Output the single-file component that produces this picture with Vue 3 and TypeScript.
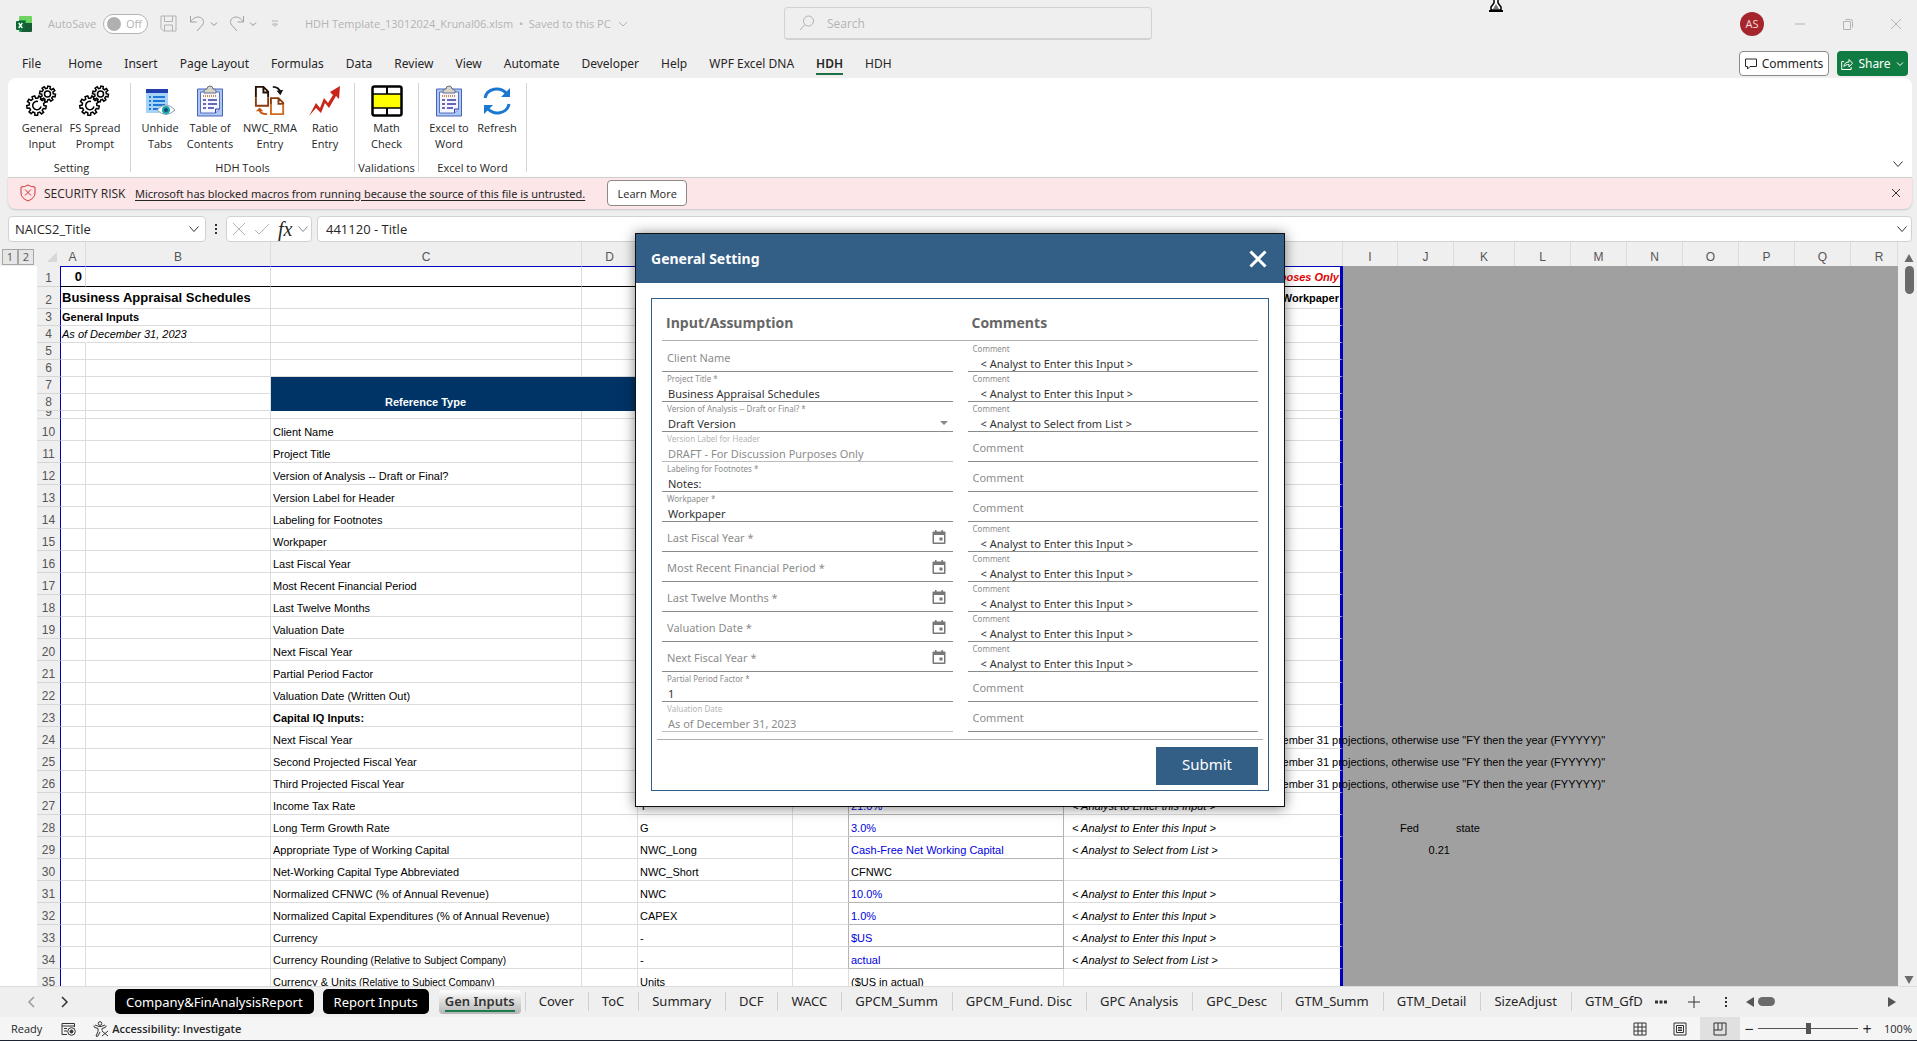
<script setup lang="ts">
import { ref } from 'vue'

type Cell = { text: string; small?: string; cls?: string }
type Row = { n: number; cls?: string; cells: Record<string, Cell> }
type Field = { id: string; label: string; value?: string; kind?: 'select' | 'date'; disabled?: boolean; comment?: string }

const menu = ['File', 'Home', 'Insert', 'Page Layout', 'Formulas', 'Data', 'Review', 'View', 'Automate', 'Developer', 'Help', 'WPF Excel DNA', 'HDH', 'HDH']
const activeMenu = 12

const groups = [
  { cls: 'g-setting', caption: 'Setting', items: [{ icon: 'gears', a: 'General', b: 'Input' }, { icon: 'gears', a: 'FS Spread', b: 'Prompt' }] },
  { cls: 'g-tools', caption: 'HDH Tools', items: [{ icon: 'unhide', a: 'Unhide', b: 'Tabs' }, { icon: 'clip', a: 'Table of', b: 'Contents' }, { icon: 'swap', a: 'NWC_RMA', b: 'Entry' }, { icon: 'ratio', a: 'Ratio', b: 'Entry' }] },
  { cls: 'g-valid', caption: 'Validations', items: [{ icon: 'math', a: 'Math', b: 'Check' }] },
  { cls: 'g-word', caption: 'Excel to Word', items: [{ icon: 'clip', a: 'Excel to', b: 'Word' }, { icon: 'refresh', a: 'Refresh', b: '' }] },
]

function gear(cx: number, cy: number, inner: number, outer: number, teeth: number): string {
  const pts: string[] = []
  const step = (Math.PI * 2) / teeth
  for (let i = 0; i < teeth; i++) {
    const a = i * step + 0.2
    const spots: [number, number][] = [[inner, -0.3], [outer, -0.2], [outer, 0.2], [inner, 0.3]]
    for (const [r, f] of spots) {
      const t = a + f * step
      pts.push(`${(cx + r * Math.cos(t)).toFixed(2)} ${(cy + r * Math.sin(t)).toFixed(2)}`)
    }
  }
  return `M${pts.join('L')}Z`
}
const bigGear = gear(10.5, 20.5, 7.4, 9.8, 9)
const smallGear = gear(21.5, 9, 5.8, 8, 8)

const columns = ['A', 'B', 'C', 'D', 'E', 'F', 'G', 'H', 'I', 'J', 'K', 'L', 'M', 'N', 'O', 'P', 'Q', 'R']

const enter = '< Analyst to Enter this Input >'
const select = '< Analyst to Select from List >'
const projection = 'December 31 projections, otherwise use "FY then the year (FYYYYY)"'

function line(n: number, c: string, e = '', g = '', h = '', blue = true): Row {
  const cells: Record<string, Cell> = { C: { text: c } }
  if (e) cells.E = { text: e }
  if (g) cells.G = { text: g, cls: blue ? 'blue' : '' }
  if (h) cells.H = { text: h, cls: 'hint' }
  return { n, cells }
}
function noteLine(n: number, c: string): Row {
  return { n, cells: { C: { text: c }, H: { text: projection, cls: 'note' } } }
}

const rows: Row[] = [
  { n: 1, cls: 'r-first', cells: { A: { text: '0', cls: 'right strong' }, H: { text: 'DRAFT - For Discussion Purposes Only', cls: 'right draft' } } },
  { n: 2, cls: 'spill title', cells: { A: { text: 'Business Appraisal Schedules', cls: 'strong' }, H: { text: 'Workpaper', cls: 'right bold' } } },
  { n: 3, cls: 'short spill', cells: { A: { text: 'General Inputs', cls: 'bold' } } },
  { n: 4, cls: 'short spill', cells: { A: { text: 'As of December 31, 2023', cls: 'italic' } } },
  { n: 5, cls: 'short', cells: {} },
  { n: 6, cls: 'short', cells: {} },
  { n: 7, cls: 'short band', cells: {} },
  { n: 8, cls: 'short band', cells: { C: { text: 'Reference Type', cls: 'bold' } } },
  { n: 9, cls: 'tiny', cells: {} },
  line(10, 'Client Name'),
  line(11, 'Project Title'),
  line(12, 'Version of Analysis -- Draft or Final?'),
  line(13, 'Version Label for Header'),
  line(14, 'Labeling for Footnotes'),
  line(15, 'Workpaper'),
  line(16, 'Last Fiscal Year'),
  line(17, 'Most Recent Financial Period'),
  line(18, 'Last Twelve Months'),
  line(19, 'Valuation Date'),
  line(20, 'Next Fiscal Year'),
  line(21, 'Partial Period Factor'),
  line(22, 'Valuation Date (Written Out)'),
  { n: 23, cells: { C: { text: 'Capital IQ Inputs:', cls: 'bold' } } },
  noteLine(24, 'Next Fiscal Year'),
  noteLine(25, 'Second Projected Fiscal Year'),
  noteLine(26, 'Third Projected Fiscal Year'),
  line(27, 'Income Tax Rate', 'T', '21.0%', enter),
  line(28, 'Long Term Growth Rate', 'G', '3.0%', enter),
  line(29, 'Appropriate Type of Working Capital', 'NWC_Long', 'Cash-Free Net Working Capital', select),
  line(30, 'Net-Working Capital Type Abbreviated', 'NWC_Short', 'CFNWC', '', false),
  line(31, 'Normalized CFNWC (% of Annual Revenue)', 'NWC', '10.0%', enter),
  line(32, 'Normalized Capital Expenditures (% of Annual Revenue)', 'CAPEX', '1.0%', enter),
  line(33, 'Currency', '-', '$US', enter),
  line(34, 'Currency Rounding', '-', 'actual', select),
  line(35, 'Currency & Units', 'Units', '($US in actual)', '', false),
]
rows[27].cells.J = { text: 'Fed' }
rows[27].cells.K = { text: 'state' }
rows[28].cells.J = { text: '0.21', cls: 'right' }
rows[33].cells.C.small = '(Relative to Subject Company)'
rows[34].cells.C.small = '(Relative to Subject Company)'

function cellClass(row: Row, col: string): string[] {
  const out = [`c-${col}`, row.cells[col]?.cls ?? '']
  if (col > 'H') out.push('outside')
  if (row.n >= 24 && row.n <= 34 && (col === 'G' || col === 'F')) out.push(col === 'G' ? 'boxed' : 'box-edge')
  return out
}

const fields: Field[] = [
  { id: 'client', label: 'Client Name', comment: enter },
  { id: 'project', label: 'Project Title *', value: 'Business Appraisal Schedules', comment: enter },
  { id: 'version', label: 'Version of Analysis -- Draft or Final? *', value: 'Draft Version', kind: 'select', comment: select },
  { id: 'header', label: 'Version Label for Header', value: 'DRAFT - For Discussion Purposes Only', disabled: true },
  { id: 'footnotes', label: 'Labeling for Footnotes *', value: 'Notes:' },
  { id: 'workpaper', label: 'Workpaper *', value: 'Workpaper' },
  { id: 'lfy', label: 'Last Fiscal Year *', kind: 'date', comment: enter },
  { id: 'mrfp', label: 'Most Recent Financial Period *', kind: 'date', comment: enter },
  { id: 'ltm', label: 'Last Twelve Months *', kind: 'date', comment: enter },
  { id: 'valdate', label: 'Valuation Date *', kind: 'date', comment: enter },
  { id: 'nfy', label: 'Next Fiscal Year *', kind: 'date', comment: enter },
  { id: 'ppf', label: 'Partial Period Factor *', value: '1' },
  { id: 'written', label: 'Valuation Date', value: 'As of December 31, 2023', disabled: true },
]

const sheets = ['Cover', 'ToC', 'Summary', 'DCF', 'WACC', 'GPCM_Summ', 'GPCM_Fund. Disc', 'GPC Analysis', 'GPC_Desc', 'GTM_Summ', 'GTM_Detail', 'SizeAdjust', 'GTM_GfD']

const open = ref(true)
const zoomLevel = ref(50)
</script>

<template>
  <div class="app">
    <header class="title-bar">
      <svg class="logo" viewBox="0 0 16 16"><path fill="#6fd35f" d="M4 0h11a1 1 0 0 1 1 1v6H3V1a1 1 0 0 1 1-1z" /><path fill="#1f9a4a" d="M3 4h7v12H4a1 1 0 0 1-1-1z" /><path fill="#185c37" d="M8 7h8v8a1 1 0 0 1-1 1H5l3-4z" /><rect y="5" width="9" height="9" rx="1" fill="#0b6b34" /><path d="M2.700 7l3.600 5M6.300 7l-3.600 5" stroke="#fff" stroke-width="1.300" /></svg>
      <span class="autosave">AutoSave</span>
      <button class="toggle"><i></i>Off</button>
      <button class="ico save" aria-label="Save"><svg viewBox="0 0 17 17"><path d="M1 1h15v15H3.500L1 13.500zM4.500 1v5.500h8V1M4.500 16v-6h8v6" /></svg></button>
      <button class="ico undo" aria-label="Undo"><svg viewBox="0 0 17 17"><path d="M1.500 1v6h6M1.500 7C4 3 8 1 11.500 2.500s4 6 1 8.500L8 16" /></svg></button>
      <button class="ico mini" aria-label="Undo list"><svg viewBox="0 0 8 8"><path d="M1 2.500l3 3 3-3" /></svg></button>
      <button class="ico redo" aria-label="Redo"><svg viewBox="0 0 17 17"><path d="M15.500 1v6h-6M15.500 7C13 3 9 1 5.500 2.500s-4 6-1 8.500L9 16" /></svg></button>
      <button class="ico mini" aria-label="Redo list"><svg viewBox="0 0 8 8"><path d="M1 2.500l3 3 3-3" /></svg></button>
      <button class="ico mini custom" aria-label="Customize toolbar"><svg viewBox="0 0 8 8"><path d="M1 1h6M1.500 4L4 6.500 6.500 4z" /></svg></button>
      <span class="file-name">HDH Template_13012024_Krunal06.xlsm&nbsp; •&nbsp; Saved to this PC</span>
      <button class="ico mini" aria-label="File info"><svg viewBox="0 0 8 8"><path d="M0 2l4 4 4-4" /></svg></button>
      <label class="search">
        <svg viewBox="0 0 16 16"><circle cx="9.500" cy="6" r="5" /><path d="M6 9.500L1 15" /></svg>
        <input type="text" placeholder="Search" aria-label="Search">
      </label>
      <svg class="pointer" viewBox="0 0 14 12"><path d="M5 0v3L2 7v3h10V7L9 3V0" fill="#fff" stroke="#000" stroke-width="1.500" /><path d="M4 9l3-5 3 5z" fill="#777" /><path d="M0 11h14" stroke="#000" stroke-width="2" /></svg>
      <span class="avatar">AS</span>
      <button class="ico win" aria-label="Minimize"><svg viewBox="0 0 12 12"><path d="M1 6h10" /></svg></button>
      <button class="ico win" aria-label="Restore"><svg viewBox="0 0 12 12"><path d="M1.500 3.500h7v8h-7zM3.500 1.500h5q2 0 2 2v6" /></svg></button>
      <button class="ico win" aria-label="Close window"><svg viewBox="0 0 12 12"><path d="M1 1l10 10M11 1L1 11" /></svg></button>
    </header>

    <nav class="menu">
      <button v-for="(m, i) in menu" :key="i" :class="{ active: i === activeMenu }">{{ m }}</button>
      <span class="grow"></span>
      <button class="comments"><svg viewBox="0 0 12 12"><path d="M.5 1h11v7.500H5L2.500 11V8.500h-2z" /></svg>Comments</button>
      <button class="share"><svg viewBox="0 0 12 12"><path d="M3 3.500H.7v8h9.500V9M3 8.500c0-3 2-4.500 5-4.500V1.500l3.500 3.700L8 9V6.500c-2 0-4 .5-5 2z" /></svg>Share<svg class="tick" viewBox="0 0 8 8"><path d="M1 2.500l3 3 3-3" /></svg></button>
    </nav>

    <section class="ribbon">
      <div v-for="g in groups" :key="g.caption" class="group" :class="g.cls">
        <div class="items">
          <button v-for="it in g.items" :key="it.a">
            <svg v-if="it.icon === 'gears'" viewBox="0 0 32 32" fill="none" stroke="#000" stroke-width="1.500"><path :d="bigGear" /><path :d="smallGear" fill="#fff" /><circle cx="21.500" cy="9" r="3" /><path d="M12 16.500a4.200 4.200 0 1 0 3 5" /></svg>
            <svg v-else-if="it.icon === 'unhide'" viewBox="0 0 32 32"><path fill="#a6d4f8" d="M2 4h22v24H2z" /><path fill="#1f3fae" d="M2 4h22v4H2z" /><path stroke="#1f78d8" stroke-width="2" d="M5 12h2M9 12h12M5 16h2M9 16h12M5 20h2M9 20h12M5 24h2M9 24h5" /><path d="M13 25q9-10 18 0-9 9-18 0z" fill="#fff" stroke="#8a9aa8" /><circle cx="22" cy="25" r="4" fill="#19a6b5" /><circle cx="22" cy="25" r="2" fill="#114a66" /></svg>
            <svg v-else-if="it.icon === 'clip'" viewBox="0 0 32 32"><path fill="#a9c8f5" stroke="#4b62b5" d="M3.500 4h25v27h-25z" /><path fill="#f3f5ff" stroke="#5a6fc0" d="M6.500 7h19v17l-4 4h-15z" /><path d="M21.500 28v-4h4" fill="#c9cdf5" stroke="#3d3da8" /><path d="M10 6q0-2 3-2 0-3 3-3t3 3q3 0 3 2v2H10z" fill="#d8d3c6" stroke="#68708f" /><path d="M9 11h14" stroke="#d0864f" stroke-width="2" stroke-dasharray="1 1" /><path d="M9 15h3M14 15h9M9 19h3M14 19h9M9 23h3M14 23h6" stroke="#3b3b99" stroke-width="1.500" /></svg>
            <svg v-else-if="it.icon === 'swap'" viewBox="0 0 34 32" fill="none" stroke-width="2"><path stroke="#241004" d="M2 12V1h8l5 5v6M10 1v6h5" /><path stroke="#8a3c0e" d="M2 12v9h13v-9M18 20v-7h8l5 5v2M26 13v6h5" /><path stroke="#d06a20" d="M18 20v10h13V20" /><path stroke="#111" d="M20 1c5 0 7 2 8 6" /><path d="M24 5l4 5 3-6z" fill="#111" /><path stroke="#c85410" d="M14 30c-5 0-8-1-8-5" /><path d="M2 27l4-4 4 4z" fill="#c85410" /></svg>
            <svg v-else-if="it.icon === 'ratio'" viewBox="0 0 32 32"><path fill="#c8261a" d="M0 31l7-13 4 5 4-10 4 5 5-8-3-3L31 1l-1 13-3-3-7 12-4-5-4 10-5-5z" /></svg>
            <svg v-else-if="it.icon === 'math'" viewBox="0 0 32 32"><rect x="1.500" y="1.500" width="29" height="29" rx="2" fill="#fff" stroke="#000" stroke-width="2.500" /><path fill="#ff0" stroke="#000" stroke-width="1.500" d="M2 9h28v14H2z" /><path stroke="#000" stroke-width="2" d="M16 2v7M16 23v7" /></svg>
            <svg v-else viewBox="0 0 32 32" fill="none" stroke="#1b78d0" stroke-width="3"><path d="M4 13C6 3 19 1 26 9M28 19C26 29 13 31 6 23" /><path d="M29 3v9h-9zM3 29v-9h9z" fill="#1b78d0" stroke="none" /></svg>
            <span>{{ it.a }}<br>{{ it.b }}</span>
          </button>
        </div>
        <div class="caption">{{ g.caption }}</div>
      </div>
      <button class="collapse" aria-label="Collapse ribbon"><svg viewBox="0 0 12 12"><path d="M1.500 3.500L6 8.500l4.500-5" /></svg></button>
    </section>
    <section class="risk">
      <svg class="shield" viewBox="0 0 16 18"><path d="M8 1q3 2 7 2v6q0 5-7 8-7-3-7-8V3q4 0 7-2z" /><path d="M5 5.500l6 6M11 5.500l-6 6" /></svg>
      <span class="risk-title">SECURITY RISK</span>
      <a href="#">Microsoft has blocked macros from running because the source of this file is untrusted.</a>
      <button class="learn">Learn More</button>
      <span class="grow"></span>
      <button class="ico dark" aria-label="Dismiss"><svg viewBox="0 0 12 12"><path d="M2 2l8 8M10 2l-8 8" /></svg></button>
    </section>

    <section class="formula">
      <div class="box name"><input type="text" value="NAICS2_Title" aria-label="Name box"><svg viewBox="0 0 12 12"><path d="M1.500 3.500L6 8.500l4.500-5" /></svg></div>
      <svg class="vdots" viewBox="0 0 4 14"><path d="M1 2h2v2H1zM1 6h2v2H1zM1 10h2v2H1z" fill="#333" /></svg>
      <div class="box fx">
        <svg class="off" viewBox="0 0 14 14"><path d="M1 1l12 12M13 1L1 13" /></svg>
        <svg class="off" viewBox="0 0 14 14"><path d="M0 8l4 4L14 2" /></svg>
        <em>fx</em>
        <svg class="off small" viewBox="0 0 12 12"><path d="M1.500 3.500L6 8.500l4.500-5" /></svg>
      </div>
      <div class="box value"><input type="text" value="441120 - Title" aria-label="Formula"><svg viewBox="0 0 12 12"><path d="M1.500 3.500L6 8.500l4.500-5" /></svg></div>
    </section>

    <main class="sheet">
      <aside class="outline"><div><button>1</button><button>2</button></div></aside>
      <div class="grid-wrap">
        <table>
          <colgroup><col class="w-head"><col v-for="c in columns" :key="c" :class="`w-${c}`"></colgroup>
          <thead><tr><th class="corner"><svg viewBox="0 0 10 10"><path d="M10 0v10H0z" fill="#d8d8d8" /></svg></th><th v-for="c in columns" :key="c">{{ c }}</th></tr></thead>
          <tbody>
            <tr v-for="r in rows" :key="r.n" :class="r.cls">
              <th><span>{{ r.n }}</span></th>
              <td v-for="c in columns" :key="c" :class="cellClass(r, c)"><template v-if="r.cells[c]">{{ r.cells[c].text }}<small v-if="r.cells[c].small">&nbsp;{{ r.cells[c].small }}</small></template></td>
            </tr>
          </tbody>
        </table>
      </div>
      <aside class="vscroll"><svg viewBox="0 0 10 9"><path d="M5 1l4.500 8h-9z" /></svg><i></i><span class="grow"></span><svg viewBox="0 0 10 9"><path d="M5 8L.5 0h9z" /></svg></aside>
    </main>

    <footer class="tabs">
      <button class="nav" aria-label="Previous sheet"><svg viewBox="0 0 12 12"><path d="M8 1L3 6l5 5" /></svg></button>
      <button class="nav next" aria-label="Next sheet"><svg viewBox="0 0 12 12"><path d="M4 1l5 5-5 5" /></svg></button>
      <button class="black">Company&amp;FinAnalysisReport</button>
      <button class="black">Report Inputs</button>
      <button class="current"><span>Gen Inputs</span></button>
      <button v-for="s in sheets" :key="s" class="plain">{{ s }}</button>
      <svg class="more" viewBox="0 0 12 4"><path d="M0 .5h3v3H0zM4.500.5h3v3h-3zM9 .5h3v3H9z" /></svg>
      <svg class="plus" viewBox="0 0 12 12"><path d="M6 0v12M0 6h12" /></svg>
      <svg class="vdots" viewBox="0 0 4 14"><path d="M1 2h2v2H1zM1 6h2v2H1zM1 10h2v2H1z" fill="#333" /></svg>
      <div class="hscroll"><svg viewBox="0 0 8 10"><path d="M8 0v10L0 5z" /></svg><i></i><span class="grow"></span><svg viewBox="0 0 8 10"><path d="M0 0v10l8-5z" /></svg></div>
    </footer>

    <footer class="status">
      <span>Ready</span>
      <svg class="macro" viewBox="0 0 15 14"><path d="M1 12.500V1.500h12.500V5M1 4h12.500M3 6.500h3M3 9h3M1 12.500h5" /><circle cx="10.500" cy="9.500" r="3.800" /><circle cx="10.500" cy="9.500" r="1.500" fill="#333" /></svg>
      <svg class="access" viewBox="0 0 16 16"><circle cx="7" cy="2.500" r="1.800" /><path d="M1 4.500q-.5 1.500 1 2L5 7.500v3L3 15q1 1 2 0l2-4M13 4.500q.5 1.500-1 2L9 7.500v2M2 4l4 1.500h2L12 4M9 10l6 5M15 10l-6 5" /></svg>
      <b>Accessibility: Investigate</b>
      <span class="grow"></span>
      <button class="view" aria-label="Normal"><svg viewBox="0 0 14 14"><path d="M1 1h12v12H1zM5 1v12M9 1v12M1 5h12M1 9h12" /></svg></button>
      <button class="view" aria-label="Page layout"><svg viewBox="0 0 14 14"><path d="M1 1h12v12H1zM3.500 3.500h7v7h-7zM5 5.500h4M5 7h4M5 8.500h4" /></svg></button>
      <button class="view on" aria-label="Page break preview"><svg viewBox="0 0 14 14"><path d="M1 1h12v12H1zM5 1v7M9 1v7M1 8h8" /></svg></button>
      <span class="sign">−</span>
      <input v-model.number="zoomLevel" type="range" min="0" max="100" aria-label="Zoom">
      <span class="sign">+</span>
      <span class="pct">100%</span>
    </footer>

    <div v-if="open" class="overlay">
      <form class="dialog" role="dialog" aria-label="General Setting" @submit.prevent>
        <header>
          <h2>General Setting</h2>
          <button type="button" aria-label="Close" @click="open = false"><svg viewBox="0 0 18 18"><path d="M1.500 1.500l15 15M16.500 1.500l-15 15" /></svg></button>
        </header>
        <div class="panel">
          <div class="heads"><h3>Input/Assumption</h3><h3>Comments</h3></div>
          <div v-for="f in fields" :key="f.id" class="pair">
            <div class="field" :class="{ filled: f.value, disabled: f.disabled }">
              <label :for="f.id">{{ f.label }}</label>
              <select v-if="f.kind === 'select'" :id="f.id"><option>{{ f.value }}</option></select>
              <input v-else :id="f.id" type="text" :value="f.value" :disabled="f.disabled">
              <svg v-if="f.kind === 'select'" class="arrow" viewBox="0 0 8 4"><path d="M0 0h8L4 4z" /></svg>
              <button v-if="f.kind === 'date'" type="button" class="cal" aria-label="Pick a date"><svg viewBox="0 0 14 14"><path fill-rule="evenodd" d="M3 0h1.500v1.500h5V0H11v1.500h1.500q1 0 1 1v10.500q0 1-1 1h-11q-1 0-1-1V2.500q0-1 1-1H3zM2 5v7.500h10V5zM7.500 7.500h3v3h-3z" /></svg></button>
            </div>
            <div class="field comment" :class="{ filled: f.comment }">
              <label :for="f.id + '-c'">Comment</label>
              <input :id="f.id + '-c'" type="text" :value="f.comment">
            </div>
          </div>
          <div class="actions"><button type="submit">Submit</button></div>
        </div>
      </form>
    </div>
  </div>
</template>

<style>
body { margin: 0; overflow: hidden; }
</style>

<style scoped>
* { box-sizing: border-box; }
.app { position: relative; display: flex; flex-direction: column; height: 100vh; background: #f0efef; font-family: "Open Sans", "Noto Sans", sans-serif; font-size: 11px; color: #262626; white-space: nowrap; overflow: hidden; }
button { font: inherit; color: inherit; background: none; border: 0; padding: 0; margin: 0; }
input, select { font: inherit; color: inherit; background: none; border: 0; padding: 0; margin: 0; outline: 0; min-width: 0; }
svg { display: block; flex: none; }
.grow { flex: 1; }

.title-bar { display: flex; align-items: center; height: 47px; flex: none; padding: 0 15px 0 16px; color: #b3b3b3; position: relative; }
.logo { width: 16px; height: 16px; }
.autosave { margin-left: 16px; width: 55px; }
.toggle { display: flex; align-items: center; gap: 5px; width: 45px; height: 20px; padding-left: 3px; border: 1px solid #b3b3b3; border-radius: 10px; background: #fff; }
.toggle i { width: 14px; height: 14px; border-radius: 50%; background: #b0b0b0; }
.ico svg { width: 17px; height: 17px; fill: none; stroke: #b3b3b3; stroke-width: 1; }
.ico.mini svg { width: 8px; height: 8px; }
.save { margin-left: 12px; }
.undo { margin-left: 12px; }
.redo { margin-left: 10px; }
.undo svg, .redo svg { stroke: #a0a0a0; }
.undo + .mini, .redo + .mini { margin-left: 4px; }
.undo + .mini svg, .redo + .mini svg { stroke: #909090; }
.custom { margin-left: 14px; }
.file-name { margin: 0 6px 0 26px; width: 308px; }
.search { position: absolute; left: 41%; width: 368px; margin-left: -2px; height: 33px; border: 1px solid #d2d2d2; border-bottom-width: 2px; border-radius: 4px; display: flex; align-items: center; padding-left: 14px; gap: 12px; font-size: 12px; }
.search svg { width: 16px; height: 16px; fill: none; stroke: #b3b3b3; }
.search input::placeholder { color: #b3b3b3; opacity: 1; }
.pointer { position: absolute; right: 414px; top: 0; width: 14px; height: 12px; }
.avatar { margin-left: auto; width: 24px; height: 24px; border-radius: 50%; background: #a4262c; color: #f5dcdc; line-height: 24px; text-align: center; }
.win { width: 12px; margin-left: 36px; }
.avatar + .win { margin-left: 30px; }
.win svg { width: 12px; height: 12px; }

.menu { display: flex; align-items: center; height: 31px; flex: none; padding: 2px 9px 0 22px; gap: 22px; font-family: "Noto Sans", sans-serif; font-size: 12px; }
.menu > button { height: 23px; }
.menu > button:first-child { margin-right: 5px; }
.menu .active { font-weight: 600; background: linear-gradient(#1d6f45, #1d6f45) bottom / 100% 2px no-repeat; }
.menu .comments, .menu .share { display: flex; align-items: center; justify-content: center; gap: 5px; height: 25px; border-radius: 4px; }
.menu svg { width: 12px; height: 12px; fill: none; stroke: currentColor; }
.menu .comments { width: 90px; border: 1px solid #8a8a8a; background: #fff; margin-right: -14px; }
.menu .share { width: 71px; background: #107c41; color: #fff; }
.menu .tick { width: 8px; height: 8px; }

.ribbon { display: flex; height: 99px; flex: none; margin: 0 5px 0 8px; padding: 5px 8px 5px 0; background: #fff; border-radius: 8px 8px 0 0; }
.group { display: flex; flex-direction: column; border-right: 1px solid #d4d4d4; }
.items { display: grid; flex: none; height: 78px; padding-top: 2px; }
.g-setting .items { grid-template-columns: 52px 54px; padding-left: 8px; }
.g-setting { width: 123px; }
.g-setting .caption { padding-left: 5px; }
.g-tools .items { grid-template-columns: 48px 52px 68px 42px; padding-left: 5px; }
.g-tools { width: 224px; }
.g-valid .items { grid-template-columns: 63px; }
.g-valid { width: 64px; }
.g-word .items { grid-template-columns: 54px 42px; padding-left: 3px; }
.g-word { width: 108px; }
.items button { display: flex; flex-direction: column; align-items: center; justify-content: flex-start; line-height: 16px; text-align: center; }
.items svg { width: 32px; height: 32px; margin-bottom: 3px; }
.caption { line-height: 14px; text-align: center; }
.collapse { margin-left: auto; align-self: flex-end; }
.collapse svg { margin-bottom: 2px; }
.collapse svg, .name svg, .value svg { width: 12px; height: 12px; fill: none; stroke: #333; }
.risk { display: flex; align-items: center; height: 32px; flex: none; margin: 0 5px 0 8px; padding: 0 10px 1px 12px; background: #fce6e8; border-top: 1px solid #cfcfcf; border-radius: 0 0 8px 8px; box-shadow: 0 1px 2px #c4c4c4; }
.shield { width: 16px; height: 18px; fill: none; stroke: #d13438; }
.risk-title { margin-left: 8px; width: 91px; font-size: 12px; }
.risk a { color: inherit; text-underline-offset: 2px; font-family: "Noto Sans", sans-serif; }
.learn { margin-left: 22px; width: 80px; height: 26px; border: 1px solid #8a8a8a; border-radius: 4px; background: #fff; }
.dark svg { width: 12px; height: 12px; stroke: #333; }

.formula { display: flex; align-items: center; height: 33px; flex: none; padding: 7px 5px 0 8px; font-size: 13px; }
.box { display: flex; align-items: center; height: 26px; background: #fff; border: 1px solid #d2d2d2; border-radius: 4px; }
.name { width: 198px; padding: 0 5px 0 6px; }
.name input, .value input { flex: 1; height: 22px; }
.vdots { width: 4px; height: 14px; }
.formula .vdots { margin: 0 8px; }
.fx { width: 86px; padding: 0 2px 0 5px; gap: 9px; margin-right: 5px; }
.off { width: 14px; height: 14px; fill: none; stroke: #b3b3b3; }
.off.small { width: 12px; height: 12px; margin-left: -4px; stroke: #888; }
.fx em { width: 16px; font-family: "Liberation Serif", serif; font-size: 20px; line-height: 20px; }
.value { flex: 1; padding: 0 3px 0 8px; }

.sheet { display: flex; flex: 1; min-height: 0; background: #fff; }
.outline { width: 37px; flex: none; }
.outline div { height: 24px; padding: 7px 0 0 2px; background: #f0efef; display: flex; }
.outline button { width: 16px; height: 16px; border: 1px solid #a6a6a6; background: #e6e6e6; line-height: 14px; color: #555; }
.grid-wrap { flex: 1; min-width: 0; overflow: hidden; font-family: "Liberation Sans", Arial, sans-serif; background: #a0a0a0; }
table { width: 100%; table-layout: fixed; border-collapse: separate; border-spacing: 0; color: #000; }
.w-head { width: 23px; } .w-A { width: 26px; } .w-B { width: 185px; } .w-C { width: 311px; }
.w-D, .w-F, .w-J, .w-L, .w-M, .w-N, .w-O, .w-P, .w-Q { width: 56px; }
.w-I { width: 55px; } .w-E { width: 155px; } .w-G { width: 215px; } .w-H { width: 279px; } .w-K { width: 61px; }
th { font-weight: 400; padding: 0; color: #555; background: #f0efef; }
thead th { height: 24px; font-size: 12px; line-height: 18px; padding-top: 6px; border-right: 1px solid #dcdcdc; }
thead th:last-child { padding-left: 10px; }
thead .corner { border: 0; }
.corner svg { width: 10px; height: 10px; margin-left: 10px; }
tbody tr { height: 22px; }
tbody th { border-bottom: 1px solid #d6d6d6; font-size: 12px; vertical-align: bottom; line-height: 15px; }
td { padding: 0 3px 0 2px; font-size: 11px; line-height: 15px; vertical-align: bottom; background: #fff; border-right: 1px solid #dcdcdc; border-bottom: 1px solid #dcdcdc; }
td.c-A { border-left: 1px solid #0000a8; padding-left: 1px; }
td.c-H { border-right: 3px solid #0000c0; padding-right: 1px; }
td.outside { background: #a0a0a0; border-color: #a0a0a0; }
.r-first { height: 21px; }
.r-first td:not(.outside) { border-top: 1px solid #0000c0; border-bottom: 1px solid #000; }
.spill td.c-A { border-right-color: #fff; }
tr.short { height: 17px; }
tr.tiny { height: 8px; }
.tiny th, .tiny td { line-height: 7px; }
.tiny th span { display: block; height: 7px; line-height: 3px; overflow: hidden; }
.band .c-C, .band .c-D, .band .c-E, .band .c-F, .band .c-G { background: #003366; border-color: #003366; color: #fff; text-align: center; }
.right { text-align: right; }
.bold { font-weight: 700; }
.strong { font-weight: 700; font-size: 13px; line-height: 18px; }
.title .strong { line-height: 21px; }
.title .bold { line-height: 19px; }
.italic, .hint { font-style: italic; }
td.hint { padding-left: 8px; }
.draft { color: #e00000; font-weight: 700; font-style: italic; line-height: 17px; }
.blue { color: #0000e0; }
td.note { padding-left: 199px; }
td.boxed { border-color: #b4b4b4; }
td.box-edge { border-right-color: #b4b4b4; }
small { font-size: 10px; }
.vscroll { width: 19px; flex: none; display: flex; flex-direction: column; align-items: center; padding: 11px 0 1px 3px; background: #f0efef; }
.vscroll svg { width: 10px; height: 9px; fill: #6b6b6b; }
.vscroll i { width: 9px; height: 28px; margin-top: 4px; border-radius: 5px; background: #6b6b6b; }

.tabs { display: flex; align-items: center; height: 31px; flex: none; border-top: 1px solid #dcdcdc; font-family: "Noto Sans", sans-serif; font-size: 13px; padding: 0 21px 1px 0; }
.nav svg { width: 12px; height: 12px; fill: none; stroke: #999; stroke-width: 1.500; }
.nav { margin-left: 26px; }
.nav.next { margin: 0 45px 0 20px; }
.next svg { stroke: #333; }
.black { height: 25px; padding: 0 11px; margin-right: 9px; border-radius: 5px; background: #000; color: #fff; }
.current { height: 24px; padding: 0 6px; margin: 0 4px 0 1px; border-radius: 4px; background: linear-gradient(#fff, #b4b4b4); font-weight: 600; color: #333; }
.current span { display: block; line-height: 18px; border-bottom: 2px solid #1d7a4a; }
.plain { height: 19px; line-height: 19px; padding: 0 14px 0 13px; border-left: 1px solid #cfcfcf; }
.plain:last-of-type { padding-right: 0; }
.more { width: 12px; height: 4px; margin-left: auto; fill: #333; }
.plus { width: 12px; height: 12px; margin: 0 24px 0 21px; fill: none; stroke: #333; }
.hscroll { display: flex; align-items: center; width: 150px; margin-left: 18px; }
.hscroll svg { width: 8px; height: 10px; fill: #555; }
.hscroll i { width: 17px; height: 9px; margin-left: 4px; border-radius: 5px; background: #6b6b6b; }

.status { display: flex; align-items: center; height: 24px; flex: none; padding: 0 5px 0 11px; background: #f5f5f5; border-bottom: 1px solid #1b2430; }
.status svg { fill: none; stroke: #333; }
.macro { width: 15px; height: 14px; margin: 0 17px 0 19px; }
.access { width: 16px; height: 16px; margin-right: 3px; }
.status b { font-weight: 600; }
.view { width: 40px; height: 23px; display: flex; align-items: center; justify-content: center; }
.view svg { width: 14px; height: 14px; }
.view.on { background: #e0e0e0; }
.sign { width: 18px; text-align: center; font-size: 16px; line-height: 20px; }
.status input { appearance: none; width: 100px; height: 12px; background: linear-gradient(#555, #555) center / 100% 1px no-repeat; }
.status input::-webkit-slider-thumb { appearance: none; width: 5px; height: 11px; background: #555; }
.pct { width: 36px; text-align: right; }

.overlay { position: absolute; inset: 0; display: flex; justify-content: center; align-items: flex-start; padding: 233px 0 0 3px; }
.dialog { width: 650px; background: #fff; border: 1px solid #111; box-shadow: 0 1px 12px #00000080; }
.dialog header { display: flex; align-items: center; justify-content: space-between; height: 49px; padding: 0 17px 0 15px; background: #335e86; color: #fff; }
.dialog h2 { margin: 0; font-family: "Noto Sans", sans-serif; font-size: 14px; font-weight: 700; }
.dialog header svg { width: 18px; height: 18px; stroke: #fff; stroke-width: 3; }
.panel { margin: 15px; border: 1px solid #335e86; padding: 0 10px 5px; font-family: "Noto Sans", sans-serif; }
.heads, .pair { display: grid; grid-template-columns: minmax(0, 1fr) minmax(0, 1fr); gap: 15px; }
.heads { height: 42px; border-bottom: 1px solid #b0b0b0; align-items: center; padding-top: 6px; }
.heads h3 { margin: 0; padding-left: 4px; font-size: 14px; font-weight: 700; color: #666; font-family: "Open Sans", sans-serif; }
.field { display: flex; align-items: center; height: 30px; border-bottom: 1px solid #8a8a8a; padding-left: 5px; color: #333; }
.heads + .pair { padding-top: 1px; }
.field label { color: #8c8c8c; line-height: 20px; padding-top: 2px; }
.field input { flex: 1; height: 16px; }
.filled { flex-wrap: wrap; align-content: flex-start; }
.filled label { flex: 0 0 100%; font-size: 8px; line-height: 10px; }
.filled input, .filled select { flex: 1; height: 17px; line-height: 17px; margin-top: 1px; padding-left: 1px; appearance: none; }
.comment.filled input { padding-left: 8px; }
.disabled { border-color: #bdbdbd; }
.disabled label { color: #b5b5b5; }
.disabled input { color: #8c8c8c; }
.arrow { width: 8px; height: 4px; margin-right: 5px; fill: #888; }
.cal { margin-right: 7px; }
.cal svg { width: 14px; height: 14px; fill: #777; }
.actions { display: flex; justify-content: flex-end; margin: 7px -5px 0; padding: 7px 5px 0; border-top: 1px solid #b0b0b0; }
.actions button { width: 102px; height: 38px; padding-bottom: 4px; background: #335e86; color: #fff; font-size: 15px; }
</style>
